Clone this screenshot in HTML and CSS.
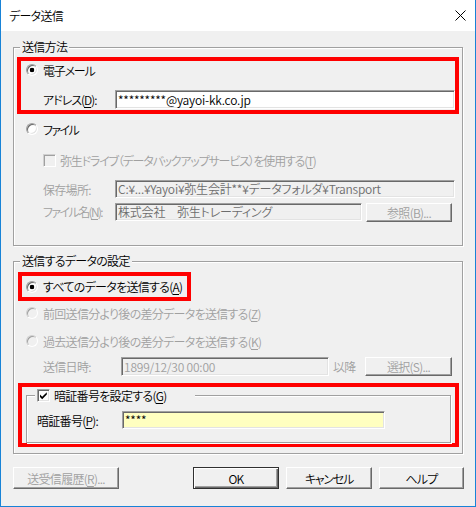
FILE: index.html
```html
<!DOCTYPE html>
<html lang="ja">
<head>
<meta charset="utf-8">
<title>データ送信</title>
<link rel="stylesheet" href="styles.css">
</head>
<body>
<div class="window">
  <div class="titlebar">
    <span class="title">データ送信</span>
    <svg class="close" width="11" height="11" viewBox="0 0 11 11"><path d="M0.5 0.5 L10.5 10.5 M10.5 0.5 L0.5 10.5" stroke="#000" stroke-width="1" fill="none"/></svg>
  </div>
  <div class="content">
    <div class="group g1">
      <div class="group-title">送信方法</div>
      <div class="mark mark-mail">
        <div class="row row-mail"><span class="radio on"></span><span class="lbl kana">電子メール</span></div>
        <div class="row row-addr"><span class="label kana-s">アドレス(<u>D</u>):</span><div class="field field-addr">*********@yayoi-kk.co.jp</div></div>
      </div>
      <div class="row row-file"><span class="radio"></span><span class="lbl kana2">ファイル</span></div>
      <div class="row row-drive dis"><span class="check dis"></span><span class="lbl">弥生ドライブ（データバックアップサービス）を使用する(<u>T</u>)</span></div>
      <div class="row row-path dis"><span class="label">保存場所:</span><div class="field ro">C:¥...¥Yayoi¥弥生会計**¥データフォルダ¥Transport</div></div>
      <div class="row row-name dis"><span class="label kana2">ファイル名(<u>N</u>):</span><div class="field ro field-name">株式会社　弥生トレーディング</div><div class="btn dis btn-ref">参照(<u>B</u>)...</div></div>
    </div>

    <div class="group g2">
      <div class="group-title">送信するデータの設定</div>
      <div class="mark mark-all">
        <div class="row row-all"><span class="radio on"></span><span class="lbl">すべてのデータを送信する(<u>A</u>)</span></div>
      </div>
      <div class="row row-prev dis"><span class="radio dis"></span><span class="lbl">前回送信分より後の差分データを送信する(<u>Z</u>)</span></div>
      <div class="row row-past dis"><span class="radio dis"></span><span class="lbl">過去送信分より後の差分データを送信する(<u>K</u>)</span></div>
      <div class="row row-date dis"><span class="label">送信日時:</span><div class="field field-date">1899/12/30 00:00</div><span class="after">以降</span><div class="btn dis btn-sel">選択(<u>S</u>)...</div></div>
      <div class="mark mark-pin">
        <div class="group g3">
          <div class="group-title g3-title"><span class="check on"><svg width="9" height="9" viewBox="0 0 9 9"><path d="M1 3.6 L3.2 5.8 L7.8 1.2 L7.8 3.6 L3.2 8.2 L1 6 Z" fill="#000"/></svg></span><span class="lbl">暗証番号を設定する(<u>G</u>)</span></div>
          <div class="row row-pin"><span class="label">暗証番号(<u>P</u>):</span><div class="field field-pin">****</div></div>
        </div>
      </div>
    </div>

    <div class="buttons">
      <div class="btn dis btn-hist">送受信履歴(<u>R</u>)...</div>
      <div class="btn default btn-ok">OK</div>
      <div class="btn btn-cancel kana">キャンセル</div>
      <div class="btn btn-help">ヘルプ</div>
    </div>
  </div>
</div>
</body>
</html>
```
FILE: styles.css
```css
* { box-sizing: border-box; }

body {
  margin: 0;
  font-family: "Noto Sans CJK JP", "Noto Sans", sans-serif;
  font-size: 12px;
  font-weight: 350;
  color: #000;
  font-feature-settings: "palt";
  letter-spacing: -0.7px;
  background: #f0f0f0;
}

u { text-underline-offset: 2px; }

.window {
  width: 476px;
  height: 507px;
  border: 1px solid #1883d7;
  border-top: 0;
  background: #f0f0f0;
  display: flex;
  flex-direction: column;
}

.titlebar {
  height: 31px;
  flex: none;
  background: #fff;
  display: flex;
  align-items: center;
  justify-content: space-between;
  padding: 0 9px 0 8px;
}

.title { line-height: 14px; }
.close { display: block; }

.content { padding: 16px 12px 0; }

.group {
  border: 1px solid #a0a0a0;
  box-shadow: inset 1px 1px #fff, 1px 1px #fff;
}

.group-title {
  display: block;
  width: fit-content;
  height: 14px;
  line-height: 14px;
  margin: -8px 0 0 6px;
  padding: 0 2px;
  background: #f0f0f0;
  white-space: nowrap;
}

.mark { border: 4px solid #ff0000; }

.row {
  display: flex;
  align-items: center;
  white-space: nowrap;
}

.label { flex: none; white-space: nowrap; }
.lbl { margin-left: 5px; white-space: nowrap; }
.kana-s { letter-spacing: -1px; }
.kana { letter-spacing: -1.2px; }
.kana2 { letter-spacing: -1.6px; }
.dis { color: #a0a0a0; }

.radio {
  flex: none;
  width: 12px;
  height: 12px;
  border-radius: 50%;
  background: #fff;
  border: 1px solid;
  border-color: #a0a0a0 #fff #fff #a0a0a0;
  box-shadow: inset 1px 1px #696969, inset -1px -1px #e3e3e3;
}
.radio.on { background: radial-gradient(circle at center, #000 0 2px, #fff 2.6px); }
.radio.dis { background: #f0f0f0; box-shadow: inset 1px 1px #a0a0a0; border-color: #d0d0d0 #fff #fff #d0d0d0; }

.check {
  flex: none;
  width: 13px;
  height: 13px;
  display: flex;
  align-items: center;
  justify-content: center;
  background: #fff;
  border: 1px solid;
  border-color: #a0a0a0 #fff #fff #a0a0a0;
  box-shadow: inset 1px 1px #696969, inset -1px -1px #e3e3e3;
}
.check.dis { background: #f0f0f0; box-shadow: inset 1px 1px #a0a0a0; border-color: #d0d0d0 #fff #fff #d0d0d0; }
.check svg { display: block; }

.field {
  flex: 1;
  min-width: 0;
  height: 18px;
  line-height: 16px;
  padding: 0 0 0 2px;
  background: #fff;
  color: #000;
  border: 1px solid;
  border-color: #a0a0a0 #fff #fff #a0a0a0;
  box-shadow: inset 1px 1px #696969, inset -1px -1px #e3e3e3;
  white-space: nowrap;
  overflow: hidden;
  letter-spacing: -0.2px;
}
.field.ro { background: #f0f0f0; color: #6d6d6d; }

.btn {
  flex: none;
  display: flex;
  align-items: center;
  justify-content: center;
  height: 22px;
  background: #f0f0f0;
  color: #000;
  border: 1px solid;
  border-color: #fff #696969 #696969 #fff;
  box-shadow: inset -1px -1px #a0a0a0;
  white-space: nowrap;
}
.btn.dis { color: #a0a0a0; }
.btn.default {
  border-color: #303030;
  box-shadow: inset 1px 1px #fff, inset -1px -1px #696969, inset -2px -2px #a0a0a0;
}

/* group 1 */
.g1 { padding-bottom: 23px; }
.mark-mail { margin: 3px 3px 0; padding-bottom: 1px; }
.row-mail { height: 18px; padding-left: 5px; }
.row-addr { height: 19px; margin-top: 11px; padding-left: 22px; }
.row-addr .label { width: 72px; }
.row-addr .field { height: 19px; line-height: 17px; }

.row-file { height: 18px; margin-top: 6px; padding-left: 12px; }
.row-drive { height: 18px; margin-top: 13px; padding-left: 29px; }
.row-drive .lbl { margin-left: 4px; letter-spacing: -1.2px; }
.row-path { height: 18px; margin-top: 11px; padding: 0 7px 0 29px; }
.row-path .label, .row-name .label { width: 72px; }
.row-name { height: 19px; margin-top: 5px; padding: 0 7px 0 29px; align-items: flex-start; }
.row-name .label { line-height: 18px; }
.field-name { flex: none; width: 247px; }
.btn-ref { width: 86px; height: 19px; margin-left: 4px; }

/* group 2 */
.g2 { margin-top: 15px; padding-bottom: 6px; }
.mark-all { margin: 4px 0 0 4px; width: fit-content; padding: 0 5px 0 4px; }
.row-all { height: 21px; }
.row-prev { height: 18px; margin-top: 3px; padding-left: 12px; }
.row-past { height: 18px; margin-top: 10px; padding-left: 12px; }
.row-date { height: 19px; margin-top: 7px; padding: 0 10px 0 29px; }
.row-date .label { width: 78px; }
.field-date { flex: none; width: 208px; height: 19px; line-height: 17px; background: #f0f0f0; color: #a0a0a0; }
.after { margin-left: 4px; }
.btn-sel { width: 87px; height: 19px; margin-left: auto; }

.mark-pin { margin: 7px 3px 0 4px; padding: 8px 4px 0; }
.g3 { padding-bottom: 13px; }
.g3-title {
  display: flex;
  align-items: center;
  width: 160px;
  height: 15px;
  margin: -8px 0 0 8px;
  padding-left: 2px;
}
.g3-title .lbl { margin-left: 4px; }
.row-pin { height: 18px; margin-top: 8px; padding-left: 10px; }
.row-pin .label { width: 85px; }
.field-pin { flex: none; width: 263px; background: #ffffc0; }

/* bottom buttons */
.buttons {
  display: flex;
  gap: 7px;
  margin-top: 13px;
  margin-right: -1px;
}
.btn-hist { width: 106px; margin-right: auto; }
.btn-ok { width: 86px; }
.btn-cancel { width: 86px; }
.btn-help { width: 85px; }
```
